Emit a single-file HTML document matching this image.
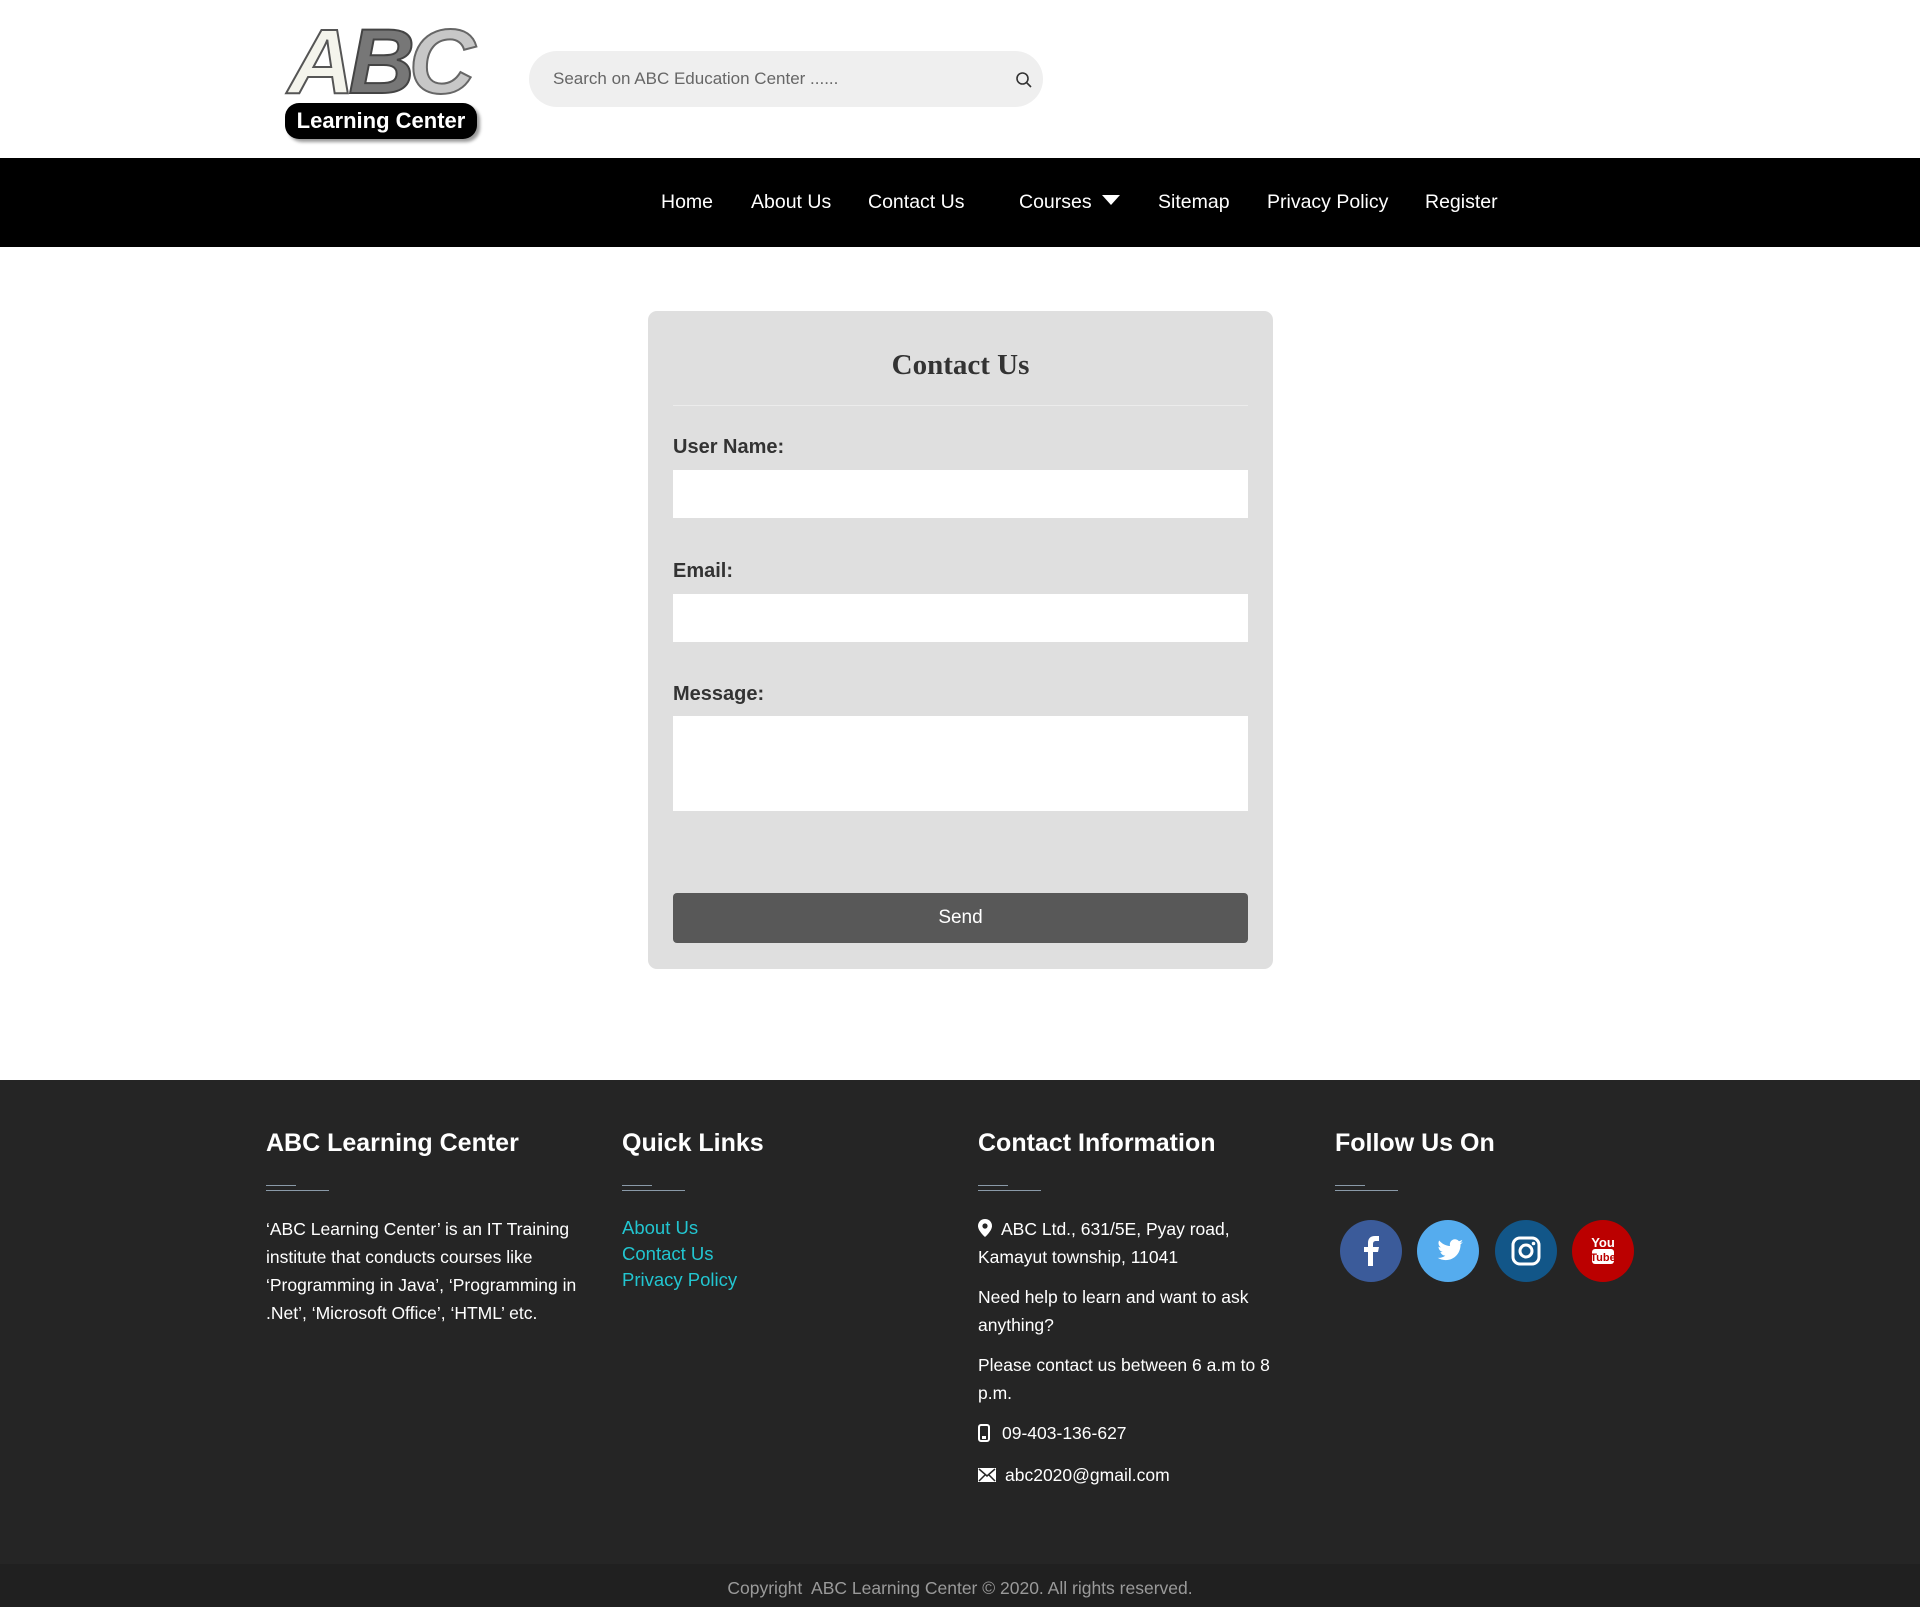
<!DOCTYPE html>
<html><head><meta charset="utf-8"><style>
*{margin:0;padding:0;box-sizing:border-box}
body{width:1920px;height:1607px;position:relative;background:#fff;font-family:"Liberation Sans",Arial,sans-serif;overflow:hidden}
.a{position:absolute;white-space:nowrap}
.nav{position:absolute;left:0;top:158px;width:1920px;height:89px;background:#000}
.nav span{position:absolute;top:33px;color:#fff;font-size:19.5px}
.card{position:absolute;left:648px;top:311px;width:625px;height:658px;background:#dfdfdf;border-radius:9px}
.lbl{position:absolute;left:25px;font-size:20px;font-weight:bold;color:#333}
.inp{position:absolute;left:25px;width:575px;background:#fff}
.foot{position:absolute;left:0;top:1080px;width:1920px;height:527px;background:#252525}
.h{position:absolute;top:49px;color:#fff;font-size:25px;font-weight:bold;white-space:nowrap}
.ul1,.ul2{position:absolute;height:1px;background:#8a9aa8}
.t{position:absolute;color:#fff;font-size:17.5px;line-height:28px}
.l{position:absolute;color:#22c5d0;font-size:19px;line-height:26px}
.c{position:absolute;top:140px;width:62px;height:62px;border-radius:50%}
</style></head><body>
<div class="a" style="left:288px;top:16px;font-family:'Liberation Sans',sans-serif;font-weight:bold;font-style:italic;font-size:92px;letter-spacing:-6px;line-height:92px">
<span style="color:#f4f4ec;-webkit-text-stroke:2px #555">A</span><span style="color:#777;-webkit-text-stroke:2px #444">B</span><span style="color:#c7c7c7;-webkit-text-stroke:2px #666">C</span></div>
<div class="a" style="left:285px;top:103px;width:192px;height:36px;background:#000;border-radius:14px;box-shadow:3px 3px 3px #999;color:#fff;font-weight:bold;font-size:22px;text-align:center;line-height:36px">Learning Center</div>
<div class="a" style="left:529px;top:51px;width:514px;height:56px;background:#efefef;border-radius:28px"></div>
<div class="a" style="left:553px;top:69px;font-size:17px;color:#666">Search on ABC Education Center ......</div>
<svg class="a" style="left:1015px;top:71px" width="18" height="18" viewBox="0 0 18 18"><circle cx="7.5" cy="7.5" r="5.5" fill="none" stroke="#333" stroke-width="1.6"/><line x1="11.5" y1="11.5" x2="16" y2="16" stroke="#333" stroke-width="1.6"/></svg>
<div class="nav">
<span style="left:661px">Home</span><span style="left:751px">About Us</span><span style="left:868px">Contact Us</span><span style="left:1019px">Courses</span>
<svg style="position:absolute;left:1102px;top:37px" width="18" height="11"><polygon points="0,0 18,0 9,10" fill="#fff"/></svg>
<span style="left:1158px">Sitemap</span><span style="left:1267px">Privacy Policy</span><span style="left:1425px">Register</span>
</div>
<div class="card">
<div class="a" style="left:0;width:625px;text-align:center;top:38px;font-family:'Liberation Serif',serif;font-weight:bold;font-size:29px;color:#333">Contact Us</div>
<div class="a" style="left:25px;top:94px;width:575px;height:1px;background:#ececec"></div>
<div class="lbl" style="top:125px">User Name:</div>
<div class="inp" style="top:159px;height:48px"></div>
<div class="lbl" style="top:249px">Email:</div>
<div class="inp" style="top:283px;height:48px"></div>
<div class="lbl" style="top:372px">Message:</div>
<div class="inp" style="top:405px;height:95px"></div>
<div class="a" style="left:25px;top:582px;width:575px;height:50px;background:#585858;border-radius:4px;color:#fff;font-size:19px;text-align:center;line-height:50px">Send</div>
</div>
<div class="foot">
<div class="h" style="left:266px">ABC Learning Center</div>
<div class="h" style="left:622px">Quick Links</div>
<div class="h" style="left:978px">Contact Information</div>
<div class="h" style="left:1335px">Follow Us On</div>
<div class="ul1" style="left:266px;top:105px;width:30px"></div><div class="ul2" style="left:266px;top:110px;width:63px"></div>
<div class="ul1" style="left:622px;top:105px;width:30px"></div><div class="ul2" style="left:622px;top:110px;width:63px"></div>
<div class="ul1" style="left:978px;top:105px;width:30px"></div><div class="ul2" style="left:978px;top:110px;width:63px"></div>
<div class="ul1" style="left:1335px;top:105px;width:30px"></div><div class="ul2" style="left:1335px;top:110px;width:63px"></div>
<div class="t" style="left:266px;top:135px;width:330px">‘ABC Learning Center’ is an IT Training institute that conducts courses like ‘Programming in Java’, ‘Programming in .Net’, ‘Microsoft Office’, ‘HTML’ etc.</div>
<div class="l" style="left:622px;top:135px;font-size:18.5px">About Us<br>Contact Us<br>Privacy Policy</div>
<div class="t" style="left:978px;top:135px;width:310px"><svg width="14" height="18" viewBox="0 0 14 18" style="vertical-align:-2px;margin-right:9px"><path d="M7 0C3 0 0 3 0 7c0 5 7 11 7 11s7-6 7-11c0-4-3-7-7-7z" fill="#fff"/><circle cx="7" cy="7" r="2.6" fill="#252525"/></svg>ABC Ltd., 631/5E, Pyay road, Kamayut township, 11041</div>
<div class="t" style="left:978px;top:203px;width:310px">Need help to learn and want to ask anything?</div>
<div class="t" style="left:978px;top:271px;width:310px">Please contact us between 6 a.m to 8 p.m.</div>
<div class="t" style="left:978px;top:339px"><svg width="12" height="18" viewBox="0 0 12 18" style="vertical-align:-3px;margin-right:12px"><rect x="1" y="1" width="10" height="16" rx="2" fill="none" stroke="#fff" stroke-width="2"/><rect x="4" y="12" width="4" height="3" fill="#fff"/></svg>09-403-136-627</div>
<div class="t" style="left:978px;top:381px"><svg width="18" height="14" viewBox="0 0 18 14" style="vertical-align:-1px;margin-right:9px"><rect width="18" height="14" fill="#fff"/><path d="M1 1l8 7 8-7M1 13l6-6M17 13l-6-6" stroke="#252525" stroke-width="1.5" fill="none"/></svg>abc2020@gmail.com</div>
<div class="c" style="left:1340px;background:#3b5b9a"><svg width="62" height="62" viewBox="0 0 62 62"><path d="M33 46V32h5l1-5h-6v-3c0-2 1-3 3-3h3v-5h-4c-5 0-7 3-7 7v4h-4v5h4v14z" fill="#fff"/></svg></div>
<div class="c" style="left:1417px;background:#55acee"><svg width="62" height="62" viewBox="0 0 62 62"><path d="M46 22c-1 .5-2 .8-3 .9 1-.7 2-1.7 2.3-3-1 .6-2 1-3.3 1.3a5.2 5.2 0 0 0-9 4.8c-4.3-.2-8.2-2.3-10.8-5.5-1.4 2.4-.6 5.4 1.6 6.9-.8 0-1.6-.3-2.3-.7 0 2.5 1.8 4.7 4.2 5.2-.8.2-1.6.2-2.3.1.7 2.1 2.6 3.6 4.9 3.6-2.2 1.7-5 2.6-7.7 2.2 2.3 1.5 5.1 2.3 7.9 2.3 9.7 0 15-8 15-15v-.7c1-.7 1.9-1.6 2.5-2.6z" fill="#fff"/></svg></div>
<div class="c" style="left:1495px;background:#125688"><svg width="62" height="62" viewBox="0 0 62 62"><rect x="18" y="18" width="26" height="26" rx="7" fill="none" stroke="#fff" stroke-width="3"/><circle cx="31" cy="31" r="6" fill="none" stroke="#fff" stroke-width="3"/><circle cx="38.5" cy="23.5" r="1.8" fill="#fff"/></svg></div>
<div class="c" style="left:1572px;background:#bb0000"><svg width="62" height="62" viewBox="0 0 62 62"><text x="31" y="27" text-anchor="middle" font-family="Liberation Sans" font-weight="bold" font-size="13" fill="#fff">You</text><rect x="20" y="29" width="22" height="15" rx="3" fill="#fff"/><text x="31" y="41" text-anchor="middle" font-family="Liberation Sans" font-weight="bold" font-size="11" fill="#bb0000">Tube</text></svg></div>
<div class="a" style="left:0;top:484px;width:1920px;height:43px;background:#202020"></div>
<div class="a" style="left:0;top:498px;width:1920px;text-align:center;color:#9a9a9a;font-size:17.5px">Copyright&nbsp; ABC Learning Center © 2020. All rights reserved.</div>
</div>
</body></html>
